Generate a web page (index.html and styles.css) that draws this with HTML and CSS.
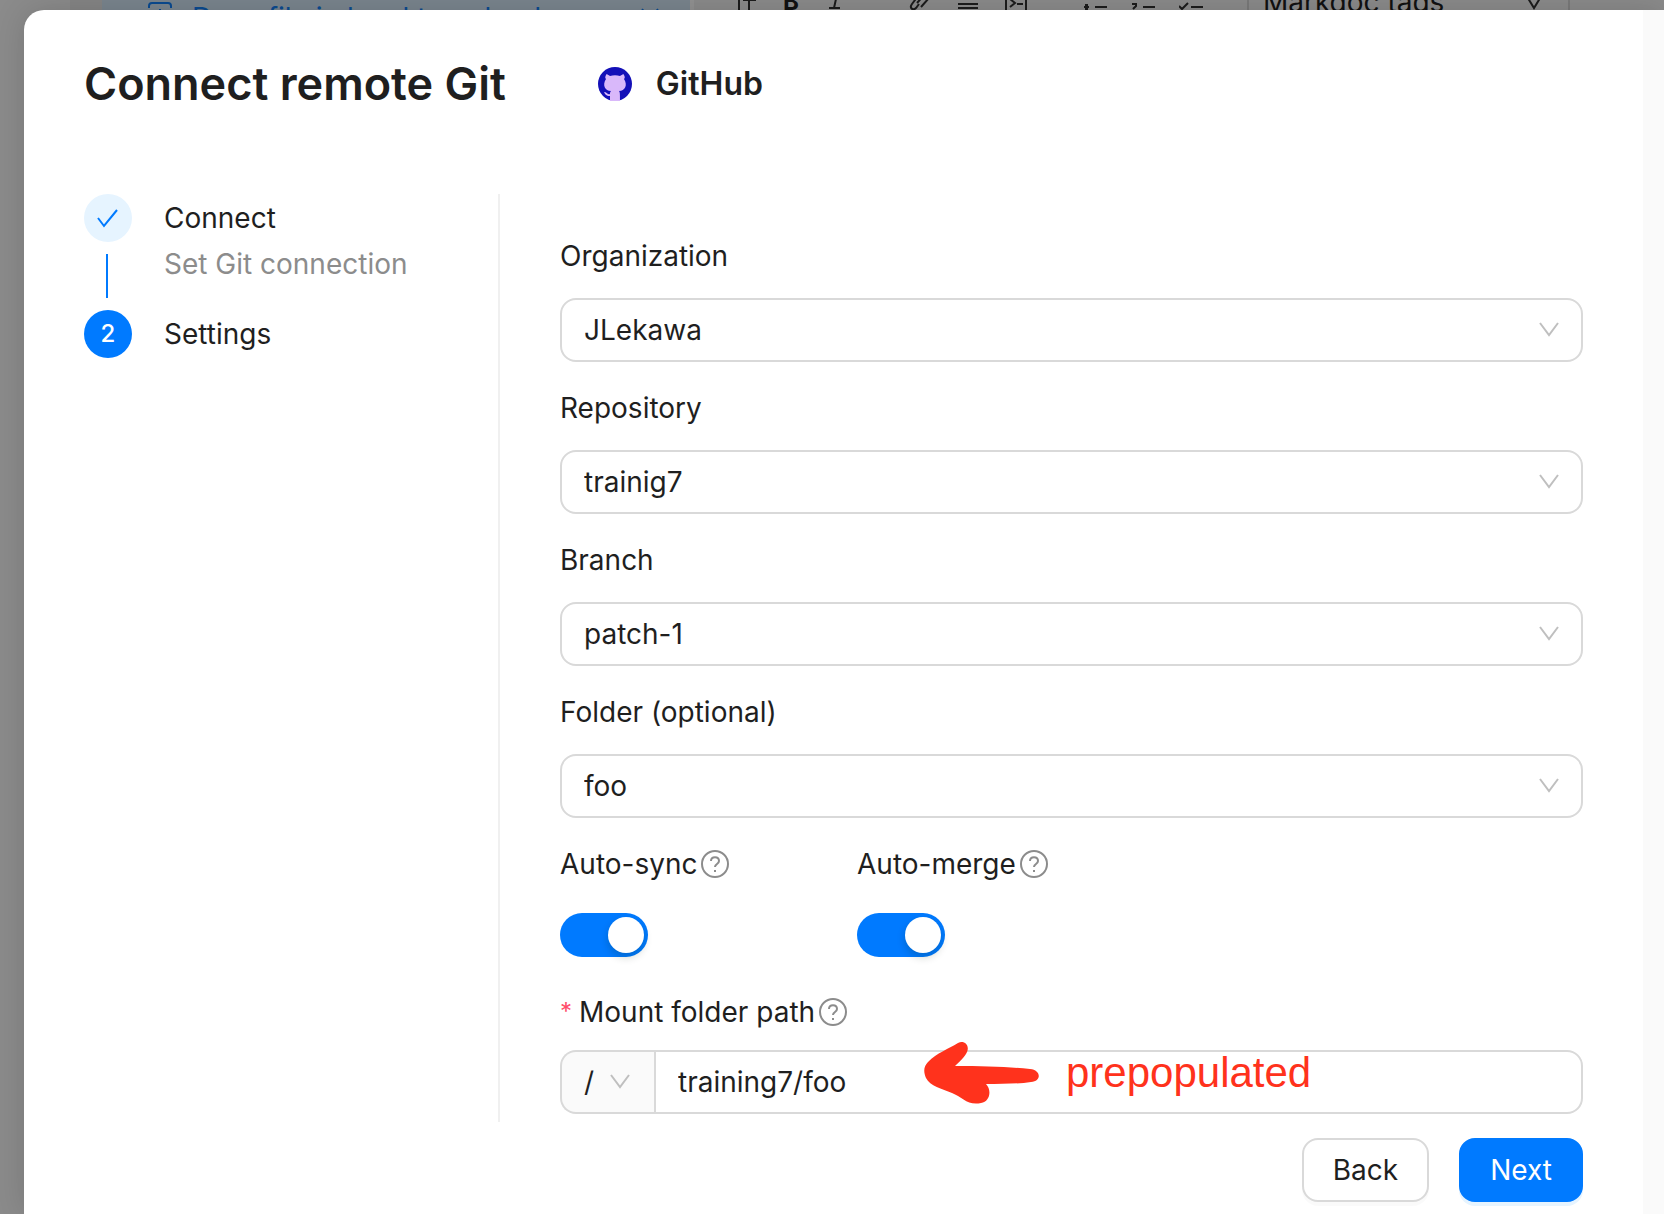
FILE: index.html
```html
<!DOCTYPE html>
<html lang="en">
	<head>
		<meta charset="UTF-8">
		<title>Connect remote Git</title>
		<link rel="stylesheet" href="styles.css">
	</head>
	<body>
		<!-- editor behind the modal -->
		<div class="editor">
			<div class="files">
				<div class="file-active">
					<svg width="24" height="36" viewBox="0 0 24 36"><path d="M1 8V6q0-3 3-3h16q3 0 3 3v2M12 9v6" /></svg>
					<a href="#">Docs file in local to upload</a>
					<svg class="more" width="24" height="36" viewBox="0 0 24 36"><path d="M3 13l2-4M19 9l2 4" /></svg>
				</div>
			</div>
			<div class="toolbar">
				<button type="button" aria-label="Text"><svg width="20" height="24" viewBox="0 0 20 24"><path d="M2 0v24M6 13h13M12 13v10" /></svg></button>
				<button class="bold" type="button">B</button>
				<button type="button" aria-label="Italic"><svg width="20" height="24" viewBox="0 0 20 24"><path d="M4 21h11M13 3l-4 18M9 3h9" /></svg></button>
				<button class="group" type="button" aria-label="Link"><svg width="24" height="24" viewBox="0 0 24 24"><path d="M10 9l-6 8c-3 4 1 7 4 4l3-4M9 16l8-9M13 20l8-9c3-4 0-8-4-5" /></svg></button>
				<button type="button" aria-label="Align"><svg width="20" height="24" viewBox="0 0 20 24"><path d="M0 12h20M0 17h20M0 21h20" /></svg></button>
				<button type="button" aria-label="Code"><svg width="24" height="24" viewBox="0 0 24 24"><path d="M2 0v24M22 0v24M6 12l5 4-5 4M13 17h6" /></svg></button>
				<button class="lists" type="button" aria-label="Bullet list"><svg width="24" height="24" viewBox="0 0 24 24"><path d="M12 20h12M1 20h5M2 18h3M2 22h3" /></svg></button>
				<button class="near" type="button" aria-label="Numbered list"><svg width="24" height="24" viewBox="0 0 24 24"><path d="M12 20h12M1 17h4v2l-3 3" /></svg></button>
				<button class="near" type="button" aria-label="Check list"><svg width="24" height="24" viewBox="0 0 24 24"><path d="M12 20h12M0 19l3 3 6-6" /></svg></button>
				<button class="tags" type="button">
					<span>Markdoc tags</span>
					<svg width="20" height="24" viewBox="0 0 20 24"><path d="M2 8l8 13 8-13" /></svg>
				</button>
			</div>
		</div>

		<div class="modal" role="dialog" aria-labelledby="title">
			<div class="modal-content">
				<div class="header">
					<h1 id="title">Connect remote Git</h1>
					<div class="provider">
						<svg width="34" height="34" viewBox="0 0 34 34">
							<circle cx="17" cy="17" r="17" fill="#1410b8" />
							<path d="M8 8c0-1 1-1 4 1 3-1 7-1 10 0 3-2 4-2 4-1 1 2 1 3 0 4 4 6 1 12-5 12 1 1 1 3 1 10H12v-5c-4 0-5-2-6-4 3 0 3 3 6 2 0-1 0-2 1-3-6 0-9-6-5-12-1-1-1-2 0-4z" fill="#d9b8fa" />
						</svg>
						<span>GitHub</span>
					</div>
				</div>

				<div class="main">
					<ol class="steps">
						<li>
							<span class="step-icon done">
								<svg width="24" height="24" viewBox="0 0 24 24"><path d="M2 12l6 8L21 4" /></svg>
							</span>
							<div class="step-text">
								<p>Connect</p>
								<p class="desc">Set Git connection</p>
							</div>
						</li>
						<li>
							<span class="step-icon">2</span>
							<div class="step-text">
								<p>Settings</p>
							</div>
						</li>
					</ol>

					<form class="settings">
						<div class="field">
							<label for="org">Organization</label>
							<div class="select">
								<select id="org"><option>JLekawa</option></select>
								<svg width="20" height="16" viewBox="0 0 20 16"><path d="M1 1l9 12 9-12" /></svg>
							</div>
						</div>
						<div class="field">
							<label for="repo">Repository</label>
							<div class="select">
								<select id="repo"><option>trainig7</option></select>
								<svg width="20" height="16" viewBox="0 0 20 16"><path d="M1 1l9 12 9-12" /></svg>
							</div>
						</div>
						<div class="field">
							<label for="branch">Branch</label>
							<div class="select">
								<select id="branch"><option>patch-1</option></select>
								<svg width="20" height="16" viewBox="0 0 20 16"><path d="M1 1l9 12 9-12" /></svg>
							</div>
						</div>
						<div class="field">
							<label for="folder">Folder (optional)</label>
							<div class="select">
								<select id="folder"><option>foo</option></select>
								<svg width="20" height="16" viewBox="0 0 20 16"><path d="M1 1l9 12 9-12" /></svg>
							</div>
						</div>

						<div class="switches">
							<div class="field">
								<label for="sync">Auto-sync
									<svg class="help" width="28" height="28" viewBox="0 0 28 28"><circle cx="14" cy="14" r="13" /><path d="M10 11c0-5 8-5 8 0 0 3-4 3-4 6M14 20v2" /></svg>
								</label>
								<input class="switch" id="sync" type="checkbox" checked>
							</div>
							<div class="field">
								<label for="merge">Auto-merge
									<svg class="help" width="28" height="28" viewBox="0 0 28 28"><circle cx="14" cy="14" r="13" /><path d="M10 11c0-5 8-5 8 0 0 3-4 3-4 6M14 20v2" /></svg>
								</label>
								<input class="switch" id="merge" type="checkbox" checked>
							</div>
						</div>

						<div class="field mount">
							<label for="mount"><span class="required">*</span>Mount folder path
								<svg class="help" width="28" height="28" viewBox="0 0 28 28"><circle cx="14" cy="14" r="13" /><path d="M10 11c0-5 8-5 8 0 0 3-4 3-4 6M14 20v2" /></svg>
							</label>
							<div class="path">
								<div class="select root">
									<select aria-label="Root folder"><option>/</option></select>
									<svg width="20" height="16" viewBox="0 0 20 16"><path d="M1 1l9 12 9-12" /></svg>
								</div>
								<input id="mount" type="text" value="training7/foo">
								<div class="note">
									<svg width="116" height="64" viewBox="0 0 116 64"><path d="M34 2C40-1 46 4 43 11C41 16 36 20 31 25C60 25 85 26 106 28C117 29 118 40 107 41C94 43 78 43 62 43C68 49 66 61 57 62C44 65 38 56 28 52C18 48 6 45 2 37C-1 30 0 25 4 21C13 12 24 8 34 2z" /></svg>
									<span>prepopulated</span>
								</div>
							</div>
						</div>
					</form>
				</div>

				<div class="footer">
					<button class="btn" type="button">Back</button>
					<button class="btn primary" type="button">Next</button>
				</div>
			</div>
			<div class="track"></div>
		</div>
	</body>
</html>
```

FILE: styles.css
```css
*{
	padding: 0;
	margin: 0;
	box-sizing: border-box;
}
body{
	min-height: 100vh;
	font-family: Inter, "Liberation Sans", sans-serif;
	font-size: 28px;
	line-height: 44px;
	color: #1f1f1f;
	background-color: #8b8b8b;
	overflow: hidden;
}
a{
	color: inherit;
	text-decoration: none;
}
li{
	list-style: none;
}
svg{
	flex: none;
	fill: none;
}
select,input,button{
	font: inherit;
	color: inherit;
}

/* editor, scrolled under the modal */
.editor{
	position: absolute;
	top: 0;
	left: 0;
	right: 0;
	display: flex;
	align-items: flex-start;
}
.files{
	width: 624px;
	margin-left: 70px;
	padding-left: 32px;
	border-right: 4px solid #929292;
	background-color: #858585;
}
.file-active{
	display: flex;
	gap: 20px;
	height: 36px;
	padding: 0 28px 0 46px;
	line-height: 36px;
	color: #0a4a90;
	background-color: #7a858e;
}
.file-active svg{
	stroke: #0a4a90;
	stroke-width: 2;
}
.file-active .more{
	margin-left: auto;
}
.toolbar{
	flex: 1;
	display: flex;
	align-items: center;
	gap: 26px;
	height: 44px;
	margin-top: -20px;
	padding: 0 94px 0 43px;
	color: #111;
}
.toolbar button{
	display: flex;
	align-items: center;
	border: 0;
	background: none;
}
.toolbar svg{
	margin-top: -6px;
	stroke: #1c1c1c;
	stroke-width: 2;
}
.toolbar .bold{
	font-size: 24px;
	font-weight: 700;
}
.toolbar .group{
	margin-left: 37px;
}
.toolbar .lists{
	margin-left: 29px;
}
.toolbar .near{
	margin-left: -2px;
}
.toolbar .tags{
	flex: 1;
	justify-content: space-between;
	margin-left: 18px;
	padding: 0 24px 0 14px;
	border: 2px solid #7a7a7a;
	border-width: 0 2px;
}

/* modal */
.modal{
	display: flex;
	min-height: calc(100vh - 10px);
	margin: 10px 0 0 24px;
	background-color: #fff;
	border-radius: 20px 0 0 0;
	box-shadow: 0 0 32px rgba(0,0,0,.15);
	position: relative;
	overflow: hidden;
}
.modal-content{
	flex: 1;
	padding: 44px 60px 0;
}
.track{
	width: 21px;
	background-color: #fafafa;
}
.header{
	display: flex;
	align-items: center;
	gap: 92px;
	height: 60px;
	margin-bottom: 80px;
}
h1{
	font-size: 45px;
	line-height: 60px;
	font-weight: 600;
}
.provider{
	display: flex;
	align-items: center;
	gap: 24px;
	font-size: 32px;
	font-weight: 600;
}
.main{
	display: flex;
}

/* steps */
.steps{
	width: 416px;
	border-right: 2px solid #f0f0f0;
}
.steps li{
	display: flex;
	gap: 32px;
	height: 116px;
	position: relative;
}
.steps li:first-child::after{
	content: "";
	position: absolute;
	left: 22px;
	top: 60px;
	bottom: 12px;
	width: 2px;
	background-color: #007aff;
}
.step-icon{
	display: flex;
	align-items: center;
	justify-content: center;
	width: 48px;
	height: 48px;
	border-radius: 50%;
	font-size: 24px;
	font-weight: 500;
	color: #fff;
	background-color: #007aff;
}
.step-icon.done{
	background-color: #e6f4ff;
}
.step-icon path{
	stroke: #007aff;
	stroke-width: 2;
}
.step-text p{
	line-height: 48px;
}
.step-text .desc{
	line-height: 44px;
	color: #8c8c8c;
}

/* form */
.settings{
	flex: 1;
	padding: 40px 0 8px 60px;
}
.field{
	margin-bottom: 24px;
}
.field label{
	display: flex;
	align-items: center;
	gap: 4px;
	margin-bottom: 20px;
}
.select{
	display: flex;
	align-items: center;
	position: relative;
}
.select select{
	appearance: none;
	width: 100%;
	height: 64px;
	padding: 0 22px;
	border: 2px solid #d9d9d9;
	border-radius: 16px;
	background-color: #fff;
}
.select svg{
	position: absolute;
	right: 24px;
	stroke: #bfbfbf;
	stroke-width: 2;
	pointer-events: none;
}
.help{
	stroke: #8c8c8c;
	stroke-width: 2;
}
.switches{
	display: flex;
}
.switches .field{
	width: 297px;
	margin-bottom: 33px;
}
.switches label{
	margin-bottom: 27px;
}
.switch{
	appearance: none;
	display: block;
	width: 88px;
	height: 44px;
	padding: 4px;
	border-radius: 22px;
	background-color: #007aff;
}
.switch::before{
	content: "";
	display: block;
	width: 36px;
	height: 36px;
	margin-left: auto;
	border-radius: 50%;
	background-color: #fff;
	box-shadow: 0 4px 8px rgba(0,35,11,.2);
}
.mount{
	margin-bottom: 0;
}
.mount label{
	margin-bottom: 16px;
}
.required{
	margin-right: 3px;
	color: #ff4d6a;
	font-size: 24px;
}
.path{
	display: flex;
	position: relative;
}
.root{
	width: 94px;
}
.root select{
	border-radius: 16px 0 0 16px;
	border-right: 0;
	background-color: #fafafa;
}
.path input{
	flex: 1;
	height: 64px;
	padding: 0 22px;
	border: 2px solid #d9d9d9;
	border-radius: 0 16px 16px 0;
	background-color: #fff;
}
.note{
	position: absolute;
	left: 364px;
	top: -9px;
	display: flex;
	align-items: center;
	gap: 26px;
	color: #ff321c;
	font-family: "Liberation Sans", Arial, sans-serif;
	font-size: 42px;
}
.note path{
	fill: #ff321c;
}

/* buttons */
.footer{
	display: flex;
	justify-content: flex-end;
	gap: 30px;
	margin-top: 16px;
}
.btn{
	height: 64px;
	padding: 0 29px;
	border: 2px solid #d9d9d9;
	border-radius: 16px;
	background-color: #fff;
	box-shadow: 0 4px 0 rgba(0,0,0,.02);
}
.btn.primary{
	color: #fff;
	border-color: #007aff;
	background-color: #007aff;
	box-shadow: 0 4px 0 #e6f4ff;
}
```
